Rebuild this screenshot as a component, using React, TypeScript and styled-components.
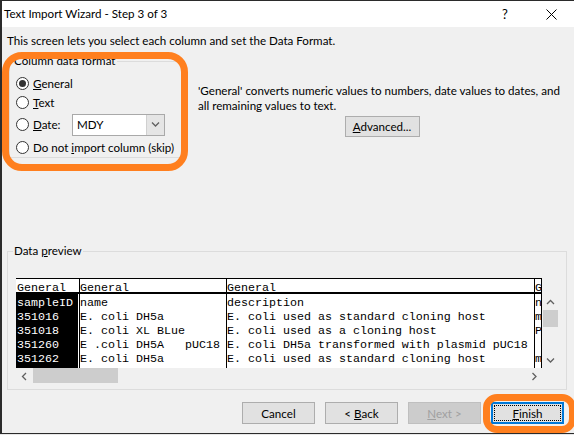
import React from 'react';
import styled, { createGlobalStyle, css } from 'styled-components';

const uiFont = `Lato, "Liberation Sans", sans-serif`;
const monoFont = `"Liberation Mono", "DejaVu Sans Mono", monospace`;
const orange = '#ff7f1e';

const GlobalStyle = createGlobalStyle`
  html, body {
    margin: 0;
    padding: 0;
    background: #e8e8e8;
  }
  #root {
    width: 574px;
    height: 435px;
    overflow: hidden;
  }
`;

const SWindow = styled.div`
  position: relative;
  box-sizing: border-box;
  width: 574px;
  height: 434px;
  display: flex;
  flex-direction: column;
  background: #f0f0f0;
  border-top: 1px solid #2b2b2b;
  border-left: 2px solid #2b2b2b;
  border-bottom: 1px solid #2b2b2b;
  font-family: ${uiFont};
  font-size: 11.6px;
  color: #000;
  overflow: hidden;
`;

const STitleBar = styled.div`
  display: flex;
  align-items: center;
  height: 26px;
  padding-left: 2px;
  background: #fff;
`;

const STitle = styled.div`
  flex: 1;
  line-height: 16px;
`;

const SCaptionButton = styled.div`
  width: 46px;
  height: 26px;
  display: flex;
  align-items: center;
  justify-content: center;
  font-size: 13px;
`;

const SBody = styled.div`
  flex: 1;
  display: flex;
  flex-direction: column;
  padding: 6px 0 0 5px;
`;

const SIntro = styled.div`
  line-height: 16px;
  white-space: nowrap;
`;

const STopRow = styled.div`
  display: flex;
  margin: 4px 0 0 2px;
`;

const SGroup = styled.fieldset<{ $w: number }>`
  box-sizing: border-box;
  width: ${(p) => p.$w}px;
  min-width: 0;
  margin: 0;
  border: 1px solid #dcdcdc;
`;

const SFormatGroup = styled(SGroup)`
  padding: 4px 0 0 6px;
  display: flex;
  flex-direction: column;
`;

const SPreviewGroup = styled(SGroup)`
  margin-top: 85px;
  margin-left: 0;
  padding: 19px 8px 5px 8px;
`;

const SLegend = styled.legend`
  padding: 0 1px;
  margin-left: -3px;
  line-height: 16px;
`;

const SRadioRow = styled.div<{ $h: number }>`
  display: flex;
  align-items: center;
  height: ${(p) => p.$h}px;
  white-space: nowrap;
`;

const SRadio = styled.span<{ $checked?: boolean }>`
  position: relative;
  box-sizing: border-box;
  flex: none;
  width: 13px;
  height: 13px;
  margin-right: 4px;
  border-radius: 50%;
  border: 1px solid #333;
  background: #fff;
  ${(p) =>
    p.$checked &&
    css`
      &::after {
        content: '';
        position: absolute;
        left: 2px;
        top: 2px;
        width: 7px;
        height: 7px;
        border-radius: 50%;
        background: #333;
      }
    `}
`;

const SDateLabel = styled.span`
  width: 39px;
`;

const SCombo = styled.div`
  box-sizing: border-box;
  display: flex;
  width: 93px;
  height: 22px;
  border: 1px solid #a9a9a9;
  background: #fff;
`;

const SComboValue = styled.div`
  flex: 1;
  padding-left: 4px;
  line-height: 20px;
`;

const SComboButton = styled.div`
  width: 17px;
  display: flex;
  align-items: center;
  justify-content: center;
  background: #e5e5e5;
  border-left: 1px solid #d0d0d0;
`;

const SInfo = styled.div`
  display: flex;
  flex-direction: column;
  width: 368px;
  margin-left: 15px;
  padding-top: 30px;
`;

const SInfoText = styled.div`
  line-height: 15px;
  white-space: nowrap;
`;

const SButton = styled.div<{ $w: number; $variant?: 'normal' | 'disabled' | 'default' }>`
  position: relative;
  box-sizing: border-box;
  width: ${(p) => p.$w}px;
  height: 22px;
  display: flex;
  align-items: center;
  justify-content: center;
  background: #e1e1e1;
  border: 1px solid #adadad;
  ${(p) =>
    p.$variant === 'disabled' &&
    css`
      background: #cccccc;
      border-color: #bfbfbf;
      color: #a0a0a0;
    `}
  ${(p) =>
    p.$variant === 'default' &&
    css`
      border: 2px solid #0078d7;
      &::after {
        content: '';
        position: absolute;
        inset: 1px;
        border: 1px dotted #000;
      }
    `}
`;

const SAdvanced = styled(SButton)`
  align-self: center;
  margin-top: 3px;
  height: 21px;
`;

const SPreview = styled.div`
  display: grid;
  grid-template-columns: 526px 16px;
  grid-template-rows: 16px 74px 16px;
`;

const STable = styled.div`
  grid-column: 1;
  grid-row: 1 / span 2;
  display: flex;
  border-top: 1px solid #000;
  background: #fff;
  font-family: ${monoFont};
  font-size: 11.67px;
`;

const SColumn = styled.div<{ $w: number }>`
  box-sizing: border-box;
  width: ${(p) => p.$w}px;
  display: flex;
  flex-direction: column;
  border-right: 1px solid #000;
  overflow: hidden;
`;

const SHeadCell = styled.div<{ $pad: number }>`
  box-sizing: border-box;
  height: 15px;
  padding: 3px 0 0 ${(p) => p.$pad}px;
  line-height: 13px;
  border-bottom: 2px solid #000;
  white-space: pre;
  overflow: hidden;
`;

const SColumnBody = styled.div<{ $dark?: boolean }>`
  flex: 1;
  padding-top: 2px;
  ${(p) =>
    p.$dark &&
    css`
      background: #000;
      color: #fff;
      box-shadow: inset -1px 0 0 #fff;
    `}
`;

const SCell = styled.div<{ $pad: number }>`
  height: 14px;
  line-height: 14px;
  padding-left: ${(p) => p.$pad}px;
  white-space: pre;
  overflow: hidden;
`;

const SVScroll = styled.div`
  grid-column: 2;
  grid-row: 2;
  display: flex;
  flex-direction: column;
`;

const SHScroll = styled.div`
  grid-column: 1;
  grid-row: 3;
  display: flex;
`;

const SArrow = styled.div`
  flex: none;
  width: 16px;
  height: 16px;
  display: flex;
  align-items: center;
  justify-content: center;
`;

const SThumb = styled.div<{ $w: number; $h: number }>`
  flex: none;
  width: ${(p) => p.$w}px;
  height: ${(p) => p.$h}px;
  margin-left: 1px;
  background: #cdcdcd;
`;

const SSpacer = styled.div`
  flex: 1;
`;

const SButtonRow = styled.div`
  display: flex;
  justify-content: flex-end;
  gap: 10px;
  margin-top: 12px;
  padding-right: 10px;
`;

const SHighlight = styled.div<{ $x: number; $y: number; $w: number; $h: number; $r: number }>`
  position: absolute;
  box-sizing: border-box;
  left: ${(p) => p.$x}px;
  top: ${(p) => p.$y}px;
  width: ${(p) => p.$w}px;
  height: ${(p) => p.$h}px;
  border: 7px solid ${orange};
  border-radius: ${(p) => p.$r}px;
  pointer-events: none;
`;

const Chevron = ({ dir }: { dir: 'up' | 'down' | 'left' | 'right' }) => {
  const pts = {
    up: '1,5 4.5,1.5 8,5',
    down: '1,1.5 4.5,5 8,1.5',
    left: '5,1 1.5,4.5 5,8',
    right: '1.5,1 5,4.5 1.5,8',
  }[dir];
  const horiz = dir === 'left' || dir === 'right';
  return (
    <svg width={horiz ? 7 : 9} height={horiz ? 9 : 7} viewBox={horiz ? '0 0 7 9' : '0 0 9 7'}>
      <polyline points={pts} fill="none" stroke="#606060" strokeWidth="1.3" />
    </svg>
  );
};

const columns = [
  { width: 64, pad: 1, head: 'General', dark: true, cells: ['sampleID', '351016', '351018', '351260', '351262'] },
  { width: 147, pad: 0, head: 'General', cells: ['name', 'E. coli DH5a', 'E. coli XL BLue', 'E .coli DH5A   pUC18', 'E. coli DH5a'] },
  {
    width: 308,
    pad: 0,
    head: 'General',
    cells: [
      'description',
      'E. coli used as standard cloning host',
      'E. coli used as a cloning host',
      'E. coli DH5a transformed with plasmid pUC18',
      'E. coli used as standard cloning host',
    ],
  },
  { width: 7, pad: 0, head: 'G', cells: ['n', 'm', 'P', '', 'm'] },
];

export default function App() {
  return (
    <>
      <GlobalStyle />
      <SWindow>
        <STitleBar>
          <STitle>Text Import Wizard - Step 3 of 3</STitle>
          <SCaptionButton>?</SCaptionButton>
          <SCaptionButton>
            <svg width="11" height="11" viewBox="0 0 11 11">
              <path d="M0.5 0.5 L10.5 10.5 M10.5 0.5 L0.5 10.5" stroke="#000" strokeWidth="1" />
            </svg>
          </SCaptionButton>
        </STitleBar>
        <SBody>
          <SIntro>This screen lets you select each column and set the Data Format.</SIntro>
          <STopRow>
            <SFormatGroup $w={174}>
              <SLegend>Column data format</SLegend>
              <SRadioRow $h={20}>
                <SRadio $checked />
                <span>
                  <u>G</u>eneral
                </span>
              </SRadioRow>
              <SRadioRow $h={19}>
                <SRadio />
                <span>
                  <u>T</u>ext
                </span>
              </SRadioRow>
              <SRadioRow $h={25}>
                <SRadio />
                <SDateLabel>
                  <u>D</u>ate:
                </SDateLabel>
                <SCombo>
                  <SComboValue>MDY</SComboValue>
                  <SComboButton>
                    <Chevron dir="down" />
                  </SComboButton>
                </SCombo>
              </SRadioRow>
              <SRadioRow $h={20}>
                <SRadio />
                <span>
                  Do not <u>i</u>mport column (skip)
                </span>
              </SRadioRow>
            </SFormatGroup>
            <SInfo>
              <SInfoText>'General' converts numeric values to numbers, date values to dates, and</SInfoText>
              <SInfoText>all remaining values to text.</SInfoText>
              <SAdvanced $w={75}>
                <span>
                  <u>A</u>dvanced...
                </span>
              </SAdvanced>
            </SInfo>
          </STopRow>
          <SPreviewGroup $w={560}>
            <SLegend>
              Data <u>p</u>review
            </SLegend>
            <SPreview>
              <STable>
                {columns.map((col, i) => (
                  <SColumn key={i} $w={col.width}>
                    <SHeadCell $pad={col.pad}>{col.head}</SHeadCell>
                    <SColumnBody $dark={col.dark}>
                      {col.cells.map((c, j) => (
                        <SCell key={j} $pad={col.pad}>
                          {c}
                        </SCell>
                      ))}
                    </SColumnBody>
                  </SColumn>
                ))}
              </STable>
              <SVScroll>
                <SArrow>
                  <Chevron dir="up" />
                </SArrow>
                <SThumb $w={15} $h={17} />
                <SSpacer />
                <SArrow>
                  <Chevron dir="down" />
                </SArrow>
              </SVScroll>
              <SHScroll>
                <SArrow>
                  <Chevron dir="left" />
                </SArrow>
                <SThumb $w={85} $h={15} />
                <SSpacer />
                <SArrow>
                  <Chevron dir="right" />
                </SArrow>
              </SHScroll>
            </SPreview>
          </SPreviewGroup>
          <SButtonRow>
            <SButton $w={73}>Cancel</SButton>
            <SButton $w={73}>
              <span>
                &lt; <u>B</u>ack
              </span>
            </SButton>
            <SButton $w={73} $variant="disabled">
              <span>
                <u>N</u>ext &gt;
              </span>
            </SButton>
            <SButton $w={73} $variant="default">
              <span>
                <u>F</u>inish
              </span>
            </SButton>
          </SButtonRow>
        </SBody>
        <SHighlight $x={0} $y={51} $w={186} $h={119} $r={20} />
        <SHighlight $x={481} $y={393} $w={93} $h={39} $r={14} />
      </SWindow>
    </>
  );
}
